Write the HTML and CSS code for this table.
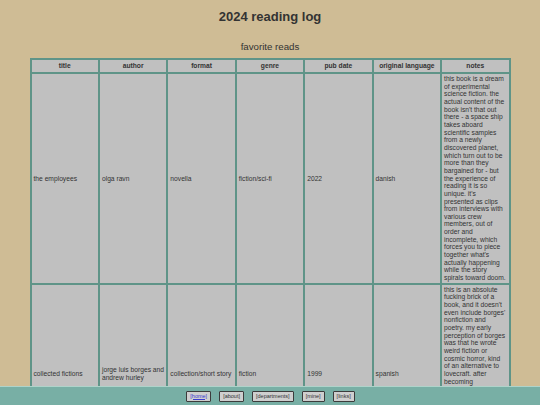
FILE: index.html
```html
<!DOCTYPE html>
<html>
<head>
<meta charset="utf-8">
<title>2024 reading log</title>
<link rel="stylesheet" href="styles.css">
</head>
<body>
<h1 class="title">2024 reading log</h1>
<h2 class="subtitle">favorite reads</h2>
<table class="log">
  <thead>
    <tr>
      <th>title</th>
      <th>author</th>
      <th>format</th>
      <th>genre</th>
      <th>pub date</th>
      <th>original language</th>
      <th>notes</th>
    </tr>
  </thead>
  <tbody>
    <tr>
      <td>the employees</td>
      <td>olga ravn</td>
      <td>novella</td>
      <td>fiction/sci-fi</td>
      <td>2022</td>
      <td>danish</td>
      <td>this book is a dream of experimental science fiction. the actual content of the book isn't that out there - a space ship takes aboard scientific samples from a newly discovered planet, which turn out to be more than they bargained for - but the experience of reading it is so unique. it's presented as clips from interviews with various crew members, out of order and incomplete, which forces you to piece together what's actually happening while the story spirals toward doom.</td>
    </tr>
    <tr>
      <td>collected fictions</td>
      <td>jorge luis borges and andrew hurley</td>
      <td>collection/short story</td>
      <td>fiction</td>
      <td>1999</td>
      <td>spanish</td>
      <td>this is an absolute fucking brick of a book, and it doesn't even include borges' nonfiction and poetry. my early perception of borges was that he wrote weird fiction or cosmic horror, kind of an alternative to lovecraft. after becoming acquainted with the rest of his work, i realized he's more of a philosopher playing with ideas - labyrinths, mirrors, infinite libraries. it's a lot to get through, but every story is worth it.</td>
    </tr>
  </tbody>
</table>
<nav class="footer">
  <button class="navbtn"><a href="#" class="navlink">[home]</a></button>
  <button class="navbtn">[about]</button>
  <button class="navbtn">[departments]</button>
  <button class="navbtn">[mine]</button>
  <button class="navbtn">[links]</button>
</nav>
</body>
</html>
```
FILE: styles.css
```css
html, body {
  margin: 0;
  padding: 0;
}
body {
  background: #cfbc95;
  color: #333333;
  font-family: "Liberation Sans", Arial, sans-serif;
  padding-bottom: 30px;
}
.title {
  margin: 9px 0 0;
  font-size: 13px;
  line-height: 15px;
  font-weight: bold;
  text-align: center;
  color: #333333;
}
.subtitle {
  margin: 17px 0 6px;
  font-size: 9.7px;
  line-height: 11px;
  font-weight: normal;
  text-align: center;
  color: #333333;
}
.log {
  width: 481px;
  margin: 0 auto;
  border-collapse: collapse;
  table-layout: fixed;
  font-size: 6.7px;
  background: #c0c0c0;
  border: 2px solid #5f9488;
}
.log th,
.log td {
  border: 2px solid #5f9488;
  color: #333333;
}
.log th {
  padding: 2px 1px;
  font-weight: bold;
  text-align: center;
  line-height: 8px;
}
.log td {
  padding: 1px 2px;
  text-align: left;
  vertical-align: middle;
  line-height: 7.65px;
}
.footer {
  position: fixed;
  left: 0;
  right: 0;
  bottom: 0;
  height: 18px;
  background: #78afa5;
  border-top: 1px solid #aed3ca;
  display: flex;
  justify-content: center;
  align-items: center;
  gap: 8px;
  padding-left: 1px;
}
.navbtn {
  font-family: "Liberation Sans", Arial, sans-serif;
  font-size: 5.5px;
  line-height: 7px;
  padding: 1px 3px;
  margin: 0;
  background: #cfcfcf;
  color: #333333;
  border: 1px solid #3c3c3c;
  border-radius: 1px;
}
.navlink {
  color: #3b3bd0;
  text-decoration: underline;
}
```
